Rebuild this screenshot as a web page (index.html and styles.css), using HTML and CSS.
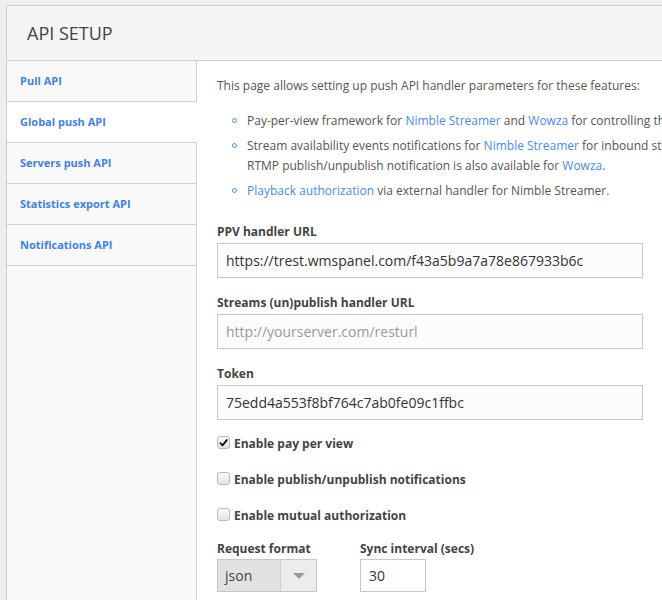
FILE: index.html
```html
<!DOCTYPE html>
<html>
<head>
<meta charset="utf-8">
<link rel="stylesheet" href="styles.css">
</head>
<body>
<div class="panel">
  <div class="panel-header">API SETUP</div>
  <div class="panel-body">
    <ul class="side-nav">
      <li class="side-item"><a href="#">Pull API</a></li>
      <li class="side-item active"><a href="#">Global push API</a></li>
      <li class="side-item"><a href="#">Servers push API</a></li>
      <li class="side-item"><a href="#">Statistics export API</a></li>
      <li class="side-item"><a href="#">Notifications API</a></li>
    </ul>
    <div class="content">
      <p class="intro">This page allows setting up push API handler parameters for these features:</p>
      <ul class="features">
        <li>Pay-per-view framework for <a href="#">Nimble Streamer</a> and <a href="#">Wowza</a> for controlling the connections of viewers.</li>
        <li>Stream availability events notifications for <a href="#">Nimble Streamer</a> for inbound streams and outgoing streams.<br>RTMP publish/unpublish notification is also available for <a href="#">Wowza</a>.</li>
        <li><a href="#">Playback authorization</a> via external handler for Nimble Streamer.</li>
      </ul>

      <div class="field">
        <label class="field-label">PPV handler URL</label>
        <div class="text-input">https://trest.wmspanel.com/f43a5b9a7a78e867933b6c</div>
      </div>
      <div class="field">
        <label class="field-label">Streams (un)publish handler URL</label>
        <div class="text-input placeholder">http://yourserver.com/resturl</div>
      </div>
      <div class="field last">
        <label class="field-label">Token</label>
        <div class="text-input">75edd4a553f8bf764c7ab0fe09c1ffbc</div>
      </div>

      <div class="check-row">
        <span class="check checked"><svg viewBox="0 0 12 12" width="12" height="12"><path d="M2.6 6.2 L4.9 8.6 L9.6 2.8" fill="none" stroke="#111" stroke-width="2" stroke-linecap="round" stroke-linejoin="round"/></svg></span>
        <span class="check-label">Enable pay per view</span>
      </div>
      <div class="check-row">
        <span class="check"></span>
        <span class="check-label">Enable publish/unpublish notifications</span>
      </div>
      <div class="check-row">
        <span class="check"></span>
        <span class="check-label">Enable mutual authorization</span>
      </div>

      <div class="inline-fields">
        <div class="field small">
          <label class="field-label">Request format</label>
          <div class="select">
            <span class="select-value">json</span>
            <span class="select-arrow"><svg viewBox="0 0 12 6" width="12" height="6"><path d="M0 0 H12 L6 6 Z" fill="#999"/></svg></span>
          </div>
        </div>
        <div class="field small">
          <label class="field-label">Sync interval (secs)</label>
          <div class="text-input short">30</div>
        </div>
      </div>
    </div>
  </div>
</div>
</body>
</html>
```
FILE: styles.css
```css
html, body {
  margin: 0;
  padding: 0;
}
body {
  background: #efefef;
  font-family: "Open Sans", "DejaVu Sans", sans-serif;
  color: #555;
  overflow: hidden;
  height: 600px;
}
a {
  color: #4a8be0;
  text-decoration: none;
}
.panel {
  margin: 5px 0 0 6px;
  width: 760px;
  border: 1px solid #cfcfcf;
  background: #fff;
}
.panel-header {
  height: 54px;
  line-height: 54px;
  padding-left: 20px;
  font-size: 18px;
  color: #444;
  background: #f5f5f5;
  border-bottom: 1px solid #cfcfcf;
}
.panel-body {
  display: flex;
  min-height: 560px;
}
.side-nav {
  list-style: none;
  margin: 0;
  padding: 0;
  width: 189px;
  flex: none;
  background: #f9f9f9;
  border-right: 1px solid #cfcfcf;
}
.side-item {
  height: 40px;
  line-height: 40px;
  border-bottom: 1px solid #cfcfcf;
  padding-left: 13px;
  font-size: 11px;
  font-weight: 700;
}
.side-item a {
  color: #3f82e0;
}
.side-item.active {
  background: #fff;
  margin-right: -1px;
}
.content {
  padding: 15px 0 0 20px;
  font-size: 12px;
  line-height: 20px;
}
.intro {
  margin: 0 0 15px;
  white-space: nowrap;
}
.features {
  list-style: none;
  margin: 0 0 21px;
  padding: 0 0 0 30px;
  white-space: nowrap;
}
.features li {
  position: relative;
  margin-bottom: 5px;
}
.features li::before {
  content: "";
  position: absolute;
  left: -15px;
  top: 7px;
  width: 3px;
  height: 3px;
  border: 1.5px solid #4a8be0;
  border-radius: 50%;
}
.field {
  margin-bottom: 15px;
}
.field.last {
  margin-bottom: 14px;
}
.field-label {
  display: block;
  font-weight: 700;
  color: #444;
  font-size: 12px;
  line-height: 20px;
  margin-bottom: 1px;
}
.small .field-label {
  margin-bottom: 0;
}
.text-input {
  box-sizing: border-box;
  width: 426px;
  height: 35px;
  line-height: 33px;
  border: 1px solid #c8c8c8;
  background: #fcfcfc;
  padding-left: 8px;
  font-size: 14px;
  color: #333;
}
.text-input.placeholder {
  color: #999;
}
.check-row {
  display: flex;
  align-items: center;
  height: 20px;
  margin-bottom: 16px;
}
.check {
  box-sizing: border-box;
  width: 13px;
  height: 13px;
  border: 1px solid #b9b9b9;
  border-radius: 3px;
  background: linear-gradient(#fafafa, #e3e3e3);
  margin-right: 4px;
  display: flex;
  align-items: center;
  justify-content: center;
  margin-top: -3px;
}
.check svg {
  display: block;
}
.check-label {
  font-weight: 700;
  color: #444;
  font-size: 12px;
}
.inline-fields {
  display: flex;
  gap: 43px;
  margin-top: -3px;
}
.select {
  box-sizing: border-box;
  display: flex;
  width: 100px;
  height: 33px;
  border: 1px solid #c8c8c8;
  background: #e2e2e2;
}
.select-value {
  width: 55px;
  padding-left: 7px;
  line-height: 31px;
  font-size: 14px;
  color: #444;
  border-right: 1px solid #cfcfcf;
}
.select-arrow {
  flex: 1;
  display: flex;
  align-items: center;
  justify-content: center;
  background: #ececec;
}
.text-input.short {
  width: 66px;
  height: 33px;
  line-height: 31px;
  background: #fff;
}
```
